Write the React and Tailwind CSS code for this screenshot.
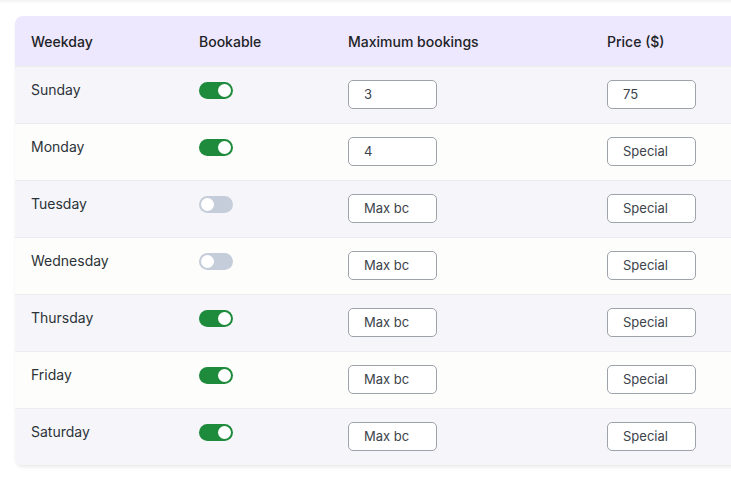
import React from "react";

const rows = [
  { day: "Sunday", on: true, max: "3", price: "75" },
  { day: "Monday", on: true, max: "4", price: "" },
  { day: "Tuesday", on: false, max: "", price: "" },
  { day: "Wednesday", on: false, max: "", price: "" },
  { day: "Thursday", on: true, max: "", price: "" },
  { day: "Friday", on: true, max: "", price: "" },
  { day: "Saturday", on: true, max: "", price: "" },
];

function Toggle({ on }) {
  return (
    <div
      className={`mt-[15px] w-[34px] h-[17px] rounded-full flex items-center px-[2px] ${
        on ? "bg-[#1e8a3b] justify-end" : "bg-[#c5cdda] justify-start"
      }`}
    >
      <div className="w-[13px] h-[13px] rounded-full bg-white" />
    </div>
  );
}

function Field({ value, placeholder }) {
  return (
    <div className="mt-[13px] w-[89px] h-[29px] rounded-[5px] border border-[#9ea3ab] bg-white flex items-center pl-[15px] text-[13px] text-[#3c434a] overflow-hidden whitespace-nowrap">
      {value || placeholder}
    </div>
  );
}

export default function App() {
  return (
    <div
      className="w-[731px] h-[479px] overflow-hidden bg-white relative"
      style={{ fontFamily: "Inter, 'Noto Sans', sans-serif" }}
    >
      <div className="h-[4px] bg-gradient-to-b from-[#f3f3f3] to-white" />
      <div className="pl-[15px] pt-[12px]">
        <div className="w-[780px] rounded-[8px] overflow-hidden shadow-[0_2px_3px_rgba(0,0,0,0.06)] border-b border-[#ececec]">
          <div className="flex h-[50px] items-center bg-[#ede8fd] text-[14px] font-medium text-[#1d2327]">
            <div className="w-[184px] pl-[16px]">Weekday</div>
            <div className="w-[149px]">Bookable</div>
            <div className="w-[259px]">Maximum bookings</div>
            <div className="flex-1">Price ($)</div>
          </div>
          {rows.map((r, i) => (
            <div
              key={r.day}
              className={`flex h-[57px] items-start border-t border-[#ececee] ${
                i % 2 === 0 ? "bg-[#f6f6fa]" : "bg-[#fdfdfb]"
              }`}
            >
              <div className="w-[184px] pl-[16px] pt-[13px] leading-[20px] text-[14px] text-[#2c3338]">
                {r.day}
              </div>
              <div className="w-[149px]">
                <Toggle on={r.on} />
              </div>
              <div className="w-[259px]">
                <Field value={r.max} placeholder="Max bc" />
              </div>
              <div className="flex-1">
                <Field value={r.price} placeholder="Special" />
              </div>
            </div>
          ))}
        </div>
      </div>
    </div>
  );
}
